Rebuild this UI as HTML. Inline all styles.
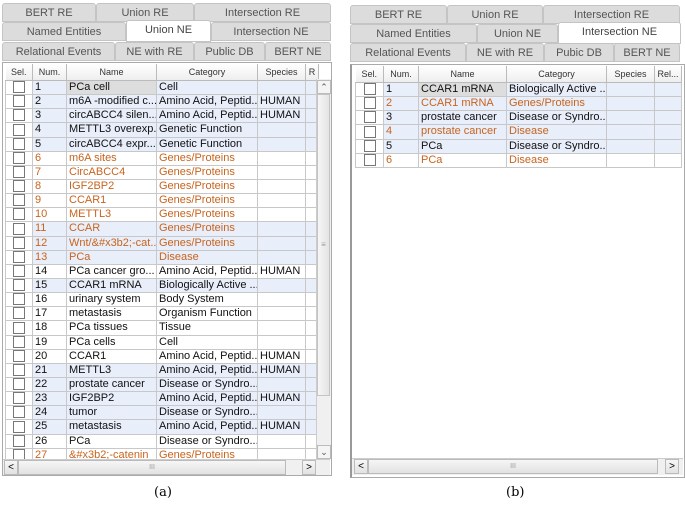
<!DOCTYPE html>
<html><head><meta charset="utf-8"><style>
body{margin:0;width:685px;height:509px;background:#fff;position:relative;overflow:hidden;font-family:"Liberation Sans",Arial,sans-serif;}
.p{position:absolute;border:1px solid #aaa;background:#fff;}
.tab{position:absolute;height:19px;background:#dcdcdc;border:1px solid #c4c4c4;box-sizing:border-box;font-size:11px;color:#555;text-align:center;line-height:18px;border-radius:3px 3px 0 0;}
.tab.s{background:#fff;color:#444;height:22px;z-index:2;}
table{position:absolute;border-collapse:collapse;table-layout:fixed;font-size:11px;}
td{height:13.15px;padding:0 2px;border:1px solid #c8c8c8;white-space:nowrap;overflow:hidden;line-height:13px;color:#111;}
th{height:16px;font-weight:normal;font-size:9px;color:#333;background:linear-gradient(#fff,#eee);border-right:1px solid #bbb;border-bottom:1px solid #bbb;padding:0;}
tr.b td{background:#e8eefa;}
tr.o td{color:#c8641e;}
td.c{padding:0;text-align:center}
.cb{display:inline-block;width:10px;height:10px;border:1px solid #777;background:#fff;vertical-align:middle;}
td.sl{background:#fff!important;}
.hs{position:absolute;height:13px;border:1px solid #bbb;background:linear-gradient(#f6f6f6,#e2e2e2);}
.cap{position:absolute;font-family:"DejaVu Serif","Liberation Serif",serif;font-size:13px;}
</style></head><body>

<div class="p" style="left:2px;top:62px;width:328px;height:412px;"></div>
<div class="tab" style="left:2px;top:3px;width:94px">BERT RE</div>
<div class="tab" style="left:96px;top:3px;width:98px">Union RE</div>
<div class="tab" style="left:194px;top:3px;width:137px">Intersection RE</div>
<div class="tab" style="left:2px;top:22px;width:124px">Named Entities</div>
<div class="tab s" style="left:126px;top:20px;width:85px">Union NE</div>
<div class="tab" style="left:211px;top:22px;width:120px">Intersection NE</div>
<div class="tab" style="left:2px;top:42px;width:113px">Relational Events</div>
<div class="tab" style="left:115px;top:42px;width:79px">NE with RE</div>
<div class="tab" style="left:194px;top:42px;width:71px">Public DB</div>
<div class="tab" style="left:265px;top:42px;width:66px">BERT NE</div>

<table style="left:5px;top:64px;width:313px">
<colgroup><col style="width:27px"><col style="width:34px"><col style="width:90px"><col style="width:101px"><col style="width:48px"><col style="width:13px"></colgroup>
<tr><th>Sel.</th><th>Num.</th><th>Name</th><th>Category</th><th>Species</th><th>R</th></tr>
<tr class="b"><td class="c sl"><span class="cb"></span></td><td>1</td><td style="background:#ddd">PCa cell</td><td>Cell</td><td></td><td></td></tr>
<tr class="b"><td class="c sl"><span class="cb"></span></td><td>2</td><td>m6A -modified c...</td><td>Amino Acid, Peptid...</td><td>HUMAN</td><td></td></tr>
<tr class="b"><td class="c sl"><span class="cb"></span></td><td>3</td><td>circABCC4 silen...</td><td>Amino Acid, Peptid...</td><td>HUMAN</td><td></td></tr>
<tr class="b"><td class="c sl"><span class="cb"></span></td><td>4</td><td>METTL3 overexp...</td><td>Genetic Function</td><td></td><td></td></tr>
<tr class="b"><td class="c sl"><span class="cb"></span></td><td>5</td><td>circABCC4 expr...</td><td>Genetic Function</td><td></td><td></td></tr>
<tr class="o"><td class="c"><span class="cb"></span></td><td>6</td><td>m6A sites</td><td>Genes/Proteins</td><td></td><td></td></tr>
<tr class="o"><td class="c"><span class="cb"></span></td><td>7</td><td>CircABCC4</td><td>Genes/Proteins</td><td></td><td></td></tr>
<tr class="o"><td class="c"><span class="cb"></span></td><td>8</td><td>IGF2BP2</td><td>Genes/Proteins</td><td></td><td></td></tr>
<tr class="o"><td class="c"><span class="cb"></span></td><td>9</td><td>CCAR1</td><td>Genes/Proteins</td><td></td><td></td></tr>
<tr class="o"><td class="c"><span class="cb"></span></td><td>10</td><td>METTL3</td><td>Genes/Proteins</td><td></td><td></td></tr>
<tr class="o b"><td class="c sl"><span class="cb"></span></td><td>11</td><td>CCAR</td><td>Genes/Proteins</td><td></td><td></td></tr>
<tr class="o b"><td class="c sl"><span class="cb"></span></td><td>12</td><td>Wnt/&amp;#x3b2;-cat...</td><td>Genes/Proteins</td><td></td><td></td></tr>
<tr class="o b"><td class="c sl"><span class="cb"></span></td><td>13</td><td>PCa</td><td>Disease</td><td></td><td></td></tr>
<tr><td class="c"><span class="cb"></span></td><td>14</td><td>PCa cancer gro...</td><td>Amino Acid, Peptid...</td><td>HUMAN</td><td></td></tr>
<tr class="b"><td class="c sl"><span class="cb"></span></td><td>15</td><td>CCAR1 mRNA</td><td>Biologically Active ...</td><td></td><td></td></tr>
<tr><td class="c"><span class="cb"></span></td><td>16</td><td>urinary system</td><td>Body System</td><td></td><td></td></tr>
<tr><td class="c"><span class="cb"></span></td><td>17</td><td>metastasis</td><td>Organism Function</td><td></td><td></td></tr>
<tr><td class="c"><span class="cb"></span></td><td>18</td><td>PCa tissues</td><td>Tissue</td><td></td><td></td></tr>
<tr><td class="c"><span class="cb"></span></td><td>19</td><td>PCa cells</td><td>Cell</td><td></td><td></td></tr>
<tr><td class="c"><span class="cb"></span></td><td>20</td><td>CCAR1</td><td>Amino Acid, Peptid...</td><td>HUMAN</td><td></td></tr>
<tr class="b"><td class="c sl"><span class="cb"></span></td><td>21</td><td>METTL3</td><td>Amino Acid, Peptid...</td><td>HUMAN</td><td></td></tr>
<tr class="b"><td class="c sl"><span class="cb"></span></td><td>22</td><td>prostate cancer</td><td>Disease or Syndro...</td><td></td><td></td></tr>
<tr class="b"><td class="c sl"><span class="cb"></span></td><td>23</td><td>IGF2BP2</td><td>Amino Acid, Peptid...</td><td>HUMAN</td><td></td></tr>
<tr class="b"><td class="c sl"><span class="cb"></span></td><td>24</td><td>tumor</td><td>Disease or Syndro...</td><td></td><td></td></tr>
<tr class="b"><td class="c sl"><span class="cb"></span></td><td>25</td><td>metastasis</td><td>Amino Acid, Peptid...</td><td>HUMAN</td><td></td></tr>
<tr><td class="c"><span class="cb"></span></td><td>26</td><td>PCa</td><td>Disease or Syndro...</td><td></td><td></td></tr>
<tr class="o"><td class="c"><span class="cb"></span></td><td>27</td><td>&amp;#x3b2;-catenin</td><td>Genes/Proteins</td><td></td><td></td></tr>
</table>
<div style="position:absolute;left:316px;top:79px;width:14px;height:380px;background:#f0f0f0;border-left:1px solid #ccc"></div>
<div style="position:absolute;left:317px;top:80px;width:12px;height:12px;border:1px solid #bbb;background:#f4f4f4;font-size:9px;text-align:center;line-height:12px;color:#555">&#8963;</div>
<div style="position:absolute;left:317px;top:94px;width:11px;height:300px;border:1px solid #c4c4c4;background:linear-gradient(90deg,#f6f6f6,#e4e4e4);font-size:8px;color:#999;text-align:center;line-height:300px">≡</div>
<div style="position:absolute;left:317px;top:445px;width:12px;height:12px;border:1px solid #bbb;background:#f4f4f4;font-size:9px;text-align:center;line-height:12px;color:#555">&#8964;</div>
<div style="position:absolute;left:3px;top:459px;width:327px;height:15px;background:#f0f0f0;border-top:1px solid #ccc"></div>
<div class="hs" style="left:4px;top:460px;width:12px;font-size:10px;line-height:13px;text-align:center">&lt;</div>
<div class="hs" style="left:18px;top:460px;width:266px;font-size:7px;color:#999;text-align:center;line-height:13px">III</div>
<div class="hs" style="left:302px;top:460px;width:12px;font-size:10px;line-height:13px;text-align:center">&gt;</div>
<div class="cap" style="left:154px;top:485px">(a)</div>

<div class="p" style="left:350px;top:64px;width:332px;height:412px;border-left:2px solid #999"></div>
<div class="tab" style="left:350px;top:5px;width:97px">BERT RE</div>
<div class="tab" style="left:447px;top:5px;width:96px">Union RE</div>
<div class="tab" style="left:543px;top:5px;width:137px">Intersection RE</div>
<div class="tab" style="left:350px;top:24px;width:127px">Named Entities</div>
<div class="tab" style="left:477px;top:24px;width:81px">Union NE</div>
<div class="tab s" style="left:558px;top:22px;width:123px">Intersection NE</div>
<div class="tab" style="left:350px;top:43px;width:116px">Relational Events</div>
<div class="tab" style="left:466px;top:43px;width:78px">NE with RE</div>
<div class="tab" style="left:544px;top:43px;width:70px">Pubic DB</div>
<div class="tab" style="left:614px;top:43px;width:66px">BERT NE</div>

<table style="left:355px;top:66px;width:326px">
<colgroup><col style="width:28px"><col style="width:35px"><col style="width:88px"><col style="width:100px"><col style="width:48px"><col style="width:27px"></colgroup>
<tr><th>Sel.</th><th>Num.</th><th>Name</th><th>Category</th><th>Species</th><th>Rel...</th></tr>
<tr class="b"><td class="c sl"><span class="cb"></span></td><td>1</td><td style="background:#ddd">CCAR1 mRNA</td><td>Biologically Active ...</td><td></td><td></td></tr>
<tr class="o b"><td class="c sl"><span class="cb"></span></td><td>2</td><td>CCAR1 mRNA</td><td>Genes/Proteins</td><td></td><td></td></tr>
<tr class="b"><td class="c sl"><span class="cb"></span></td><td>3</td><td>prostate cancer</td><td>Disease or Syndro...</td><td></td><td></td></tr>
<tr class="o b"><td class="c sl"><span class="cb"></span></td><td>4</td><td>prostate cancer</td><td>Disease</td><td></td><td></td></tr>
<tr class="b"><td class="c sl"><span class="cb"></span></td><td>5</td><td>PCa</td><td>Disease or Syndro...</td><td></td><td></td></tr>
<tr class="o"><td class="c"><span class="cb"></span></td><td>6</td><td>PCa</td><td>Disease</td><td></td><td></td></tr>
</table>
<div style="position:absolute;left:352px;top:458px;width:331px;height:16px;background:#f0f0f0;border-top:1px solid #ccc"></div>
<div class="hs" style="left:354px;top:459px;width:12px;font-size:10px;line-height:13px;text-align:center">&lt;</div>
<div class="hs" style="left:368px;top:459px;width:288px;font-size:7px;color:#999;text-align:center;line-height:13px">III</div>
<div class="hs" style="left:665px;top:459px;width:12px;font-size:10px;line-height:13px;text-align:center">&gt;</div>
<div class="cap" style="left:506px;top:485px">(b)</div>
</body></html>
